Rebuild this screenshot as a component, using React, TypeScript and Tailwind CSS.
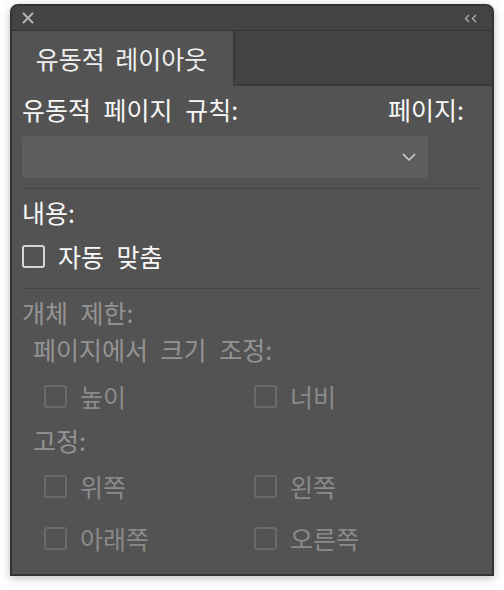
import React from "react";

const font = { fontFamily: '"Noto Sans CJK KR", "Noto Sans", sans-serif' };

function Box({ disabled }: { disabled?: boolean }) {
  return (
    <span
      className={
        "block h-[23px] w-[23px] shrink-0 rounded-[3px] border-2 " +
        (disabled ? "border-[#6a6a6a]" : "border-[#d6d6d6]")
      }
    />
  );
}

function Check({ label, disabled }: { label: string; disabled?: boolean }) {
  return (
    <label className="flex h-[23px] items-center gap-[13px]">
      <Box disabled={disabled} />
      <span className={disabled ? "text-[#8a8a8a]" : "text-[#f7f7f7]"}>{label}</span>
    </label>
  );
}

export default function App() {
  return (
    <div className="h-[590px] w-[504px] bg-white pl-[10px] pt-[4px]" style={font}>
      <div className="flex h-[572px] w-[484px] flex-col overflow-hidden rounded-t-[8px] border-2 border-[#333333] bg-[#535353] text-[25px] leading-none [word-spacing:7px] shadow-[0_2px_10px_rgba(0,0,0,0.25)]">
        {/* title bar */}
        <div className="flex h-[25px] shrink-0 items-center justify-between border-b border-[#333333] bg-[#434343] pl-[10px] pr-[14px]">
          <svg width="12" height="12" viewBox="0 0 12 12" className="text-[#b4b4b4]">
            <path d="M1 1 L11 11 M11 1 L1 11" stroke="currentColor" strokeWidth="2" />
          </svg>
          <svg width="14" height="9" viewBox="0 0 14 9" className="text-[#b4b4b4]">
            <path d="M5 1 L1.5 4.5 L5 8 M12 1 L8.5 4.5 L12 8" stroke="currentColor" strokeWidth="1.3" fill="none" />
          </svg>
        </div>

        {/* tabs */}
        <div className="flex h-[55px] shrink-0">
          <div className="flex w-[223px] items-center justify-center border-r-2 border-[#3a3a3a] pr-[2px] text-[#eeeeee] [word-spacing:5px]">
            유동적 레이아웃
          </div>
          <div className="flex-1 border-b-2 border-[#3a3a3a] bg-[#434343]" />
        </div>

        {/* content */}
        <div className="flex flex-col px-[10px]">
          <div className="flex h-[50px] items-center justify-between pr-[18px] pb-[3px] text-[#f7f7f7]">
            <span>유동적 페이지 규칙:</span>
            <span>페이지:</span>
          </div>
          <div className="flex h-[42px] w-[406px] items-center justify-end rounded-[4px] bg-[#5e5e5e] pr-[12px]">
            <svg width="14" height="8" viewBox="0 0 14 8" className="text-[#cfcfcf]">
              <path d="M1 1 L7 7 L13 1" stroke="currentColor" strokeWidth="1.5" fill="none" />
            </svg>
          </div>
          <div className="mt-[10px] h-px bg-[#474747]" />

          <div className="flex h-[46px] items-center text-[#f7f7f7]">내용:</div>
          <div className="mt-[10px]">
            <Check label="자동 맞춤" />
          </div>
          <div className="mt-[20px] h-px bg-[#474747]" />

          <div className="flex h-[46px] items-center text-[#939393]">개체 제한:</div>
          <div className="flex h-[30px] items-center pl-[11px] pb-[1px] text-[#939393]">페이지에서 크기 조정:</div>
          <div className="mt-[20px] grid grid-cols-[210px_1fr] pl-[22px]">
            <Check label="높이" disabled />
            <Check label="너비" disabled />
          </div>
          <div className="mt-[17px] flex h-[30px] items-center pl-[11px] text-[#939393]">고정:</div>
          <div className="mt-[20px] grid grid-cols-[210px_1fr] gap-y-[29px] pl-[22px]">
            <Check label="위쪽" disabled />
            <Check label="왼쪽" disabled />
            <Check label="아래쪽" disabled />
            <Check label="오른쪽" disabled />
          </div>
        </div>
      </div>
    </div>
  );
}
